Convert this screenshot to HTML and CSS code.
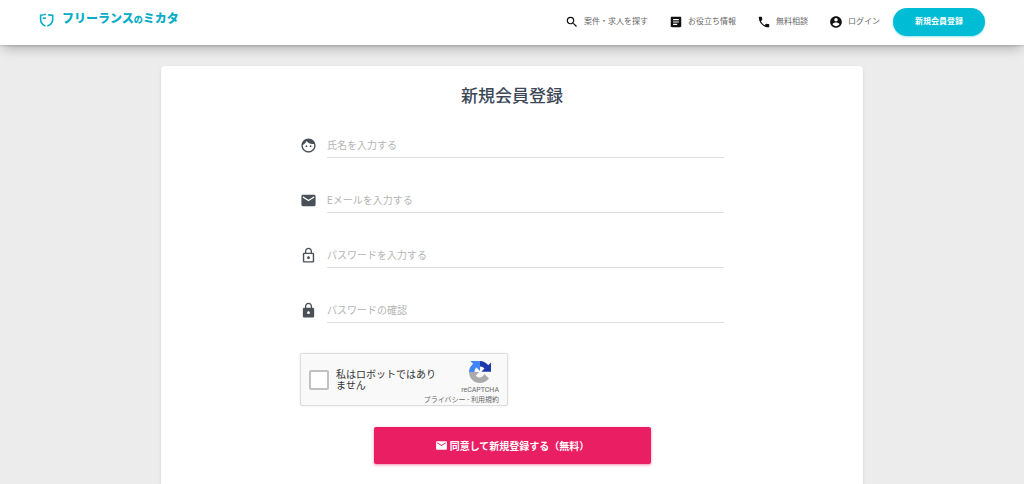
FILE: index.html
```
<!DOCTYPE html>
<html lang="ja">

<head>
    <meta charset="UTF-8">
    <meta name="viewport" content="width=device-width, initial-scale=1.0">
    <title>新規会員登録 | フリーランスのミカタ</title>
    <link rel="stylesheet" href="styles.css">
</head>

<body>
    <header class="navbar">
        <a class="logo" href="#">
            <svg viewBox="0 0 28 26" fill="none" stroke="currentColor" stroke-width="3">
                <path d="M13 2C10 3.500 6 4 3 4v8c0 6 3 9.500 9 12" />
                <path d="M17 3C20 4 22 4 25.500 4v8c0 6-4 10-10 12" />
                <path d="M7 9.500h6" />
            </svg>
            <span>フリーランス<small>の</small>ミカタ</span>
        </a>
        <nav class="menu">
            <a href="#">
                <svg viewBox="0 0 24 24"><path d="M15.500 14h-.79l-.28-.27A6.470 6.470 0 0 0 16 9.500 6.500 6.500 0 1 0 9.500 16c1.610 0 3.090-.59 4.230-1.570l.27.28v.79l5 4.990L20.490 19l-4.990-5zm-6 0C7.010 14 5 11.990 5 9.500S7.010 5 9.500 5 14 7.010 14 9.500 11.990 14 9.500 14z" /></svg>
                案件・求人を探す
            </a>
            <a href="#">
                <svg viewBox="0 0 24 24"><path d="M19 3H5c-1.100 0-2 .9-2 2v14c0 1.100.9 2 2 2h14c1.100 0 2-.9 2-2V5c0-1.100-.9-2-2-2zm-5 14H7v-2h7v2zm3-4H7v-2h10v2zm0-4H7V7h10v2z" /></svg>
                お役立ち情報
            </a>
            <a href="#">
                <svg viewBox="0 0 24 24"><path d="M6.620 10.790c1.440 2.830 3.760 5.140 6.590 6.590l2.200-2.200c.27-.27.67-.36 1.020-.24 1.120.37 2.330.57 3.570.57.55 0 1 .45 1 1V20c0 .55-.45 1-1 1-9.390 0-17-7.610-17-17 0-.55.45-1 1-1h3.500c.55 0 1 .45 1 1 0 1.250.2 2.450.57 3.570.11.35.03.74-.25 1.020l-2.200 2.200z" /></svg>
                無料相談
            </a>
            <a href="#">
                <svg viewBox="0 0 24 24"><path d="M12 2C6.480 2 2 6.480 2 12s4.480 10 10 10 10-4.480 10-10S17.520 2 12 2zm0 3c1.660 0 3 1.340 3 3s-1.340 3-3 3-3-1.340-3-3 1.340-3 3-3zm0 14.200c-2.500 0-4.710-1.280-6-3.220.03-1.990 4-3.080 6-3.080 1.990 0 5.970 1.090 6 3.080-1.290 1.940-3.500 3.220-6 3.220z" /></svg>
                ログイン
            </a>
        </nav>
        <a class="btn-register" href="#">新規会員登録</a>
    </header>

    <main class="card">
        <h1>新規会員登録</h1>
        <form>
            <div class="field">
                <label for="name" aria-label="氏名">
                    <svg viewBox="0 0 24 24"><path d="M9 11.750a1.250 1.250 0 1 0 0 2.500 1.250 1.250 0 0 0 0-2.500zm6 0a1.250 1.250 0 1 0 0 2.500 1.250 1.250 0 0 0 0-2.500zM12 2C6.480 2 2 6.480 2 12s4.480 10 10 10 10-4.480 10-10S17.520 2 12 2zm0 18c-4.410 0-8-3.590-8-8 0-.29.02-.58.05-.86 2.360-1.050 4.230-2.980 5.210-5.370C11.070 8.330 14.050 10 17.420 10c.78 0 1.530-.09 2.250-.26.21.71.33 1.470.33 2.260 0 4.410-3.590 8-8 8z" /></svg>
                </label>
                <input type="text" id="name" placeholder="氏名を入力する">
            </div>
            <div class="field">
                <label for="email" aria-label="Eメール">
                    <svg viewBox="0 0 24 24"><path d="M20 4H4c-1.100 0-2 .9-2 2v12c0 1.100.9 2 2 2h16c1.100 0 2-.9 2-2V6c0-1.100-.9-2-2-2zm0 4l-8 5-8-5V6l8 5 8-5v2z" /></svg>
                </label>
                <input type="email" id="email" placeholder="Eメールを入力する">
            </div>
            <div class="field">
                <label for="password" aria-label="パスワード">
                    <svg viewBox="0 0 24 24"><path fill-rule="evenodd" d="M12 17c1.100 0 2-.9 2-2s-.9-2-2-2-2 .9-2 2 .9 2 2 2zM18 8h-1V6c0-2.760-2.240-5-5-5S7 3.240 7 6v2H6c-1.100 0-2 .9-2 2v10c0 1.100.9 2 2 2h12c1.100 0 2-.9 2-2V10c0-1.100-.9-2-2-2zM8.900 6c0-1.710 1.390-3.100 3.100-3.100s3.100 1.390 3.100 3.100v2H8.900V6zM18 20H6V10h12v10z" /></svg>
                </label>
                <input type="password" id="password" placeholder="パスワードを入力する">
            </div>
            <div class="field">
                <label for="confirm" aria-label="パスワードの確認">
                    <svg viewBox="0 0 24 24"><path d="M18 8h-1V6c0-2.760-2.240-5-5-5S7 3.240 7 6v2H6c-1.100 0-2 .9-2 2v10c0 1.100.9 2 2 2h12c1.100 0 2-.9 2-2V10c0-1.100-.9-2-2-2zm-6 9c-1.100 0-2-.9-2-2s.9-2 2-2 2 .9 2 2-.9 2-2 2zm3.100-9H8.900V6c0-1.710 1.390-3.100 3.100-3.100s3.100 1.390 3.100 3.100v2z" /></svg>
                </label>
                <input type="password" id="confirm" placeholder="パスワードの確認">
            </div>

            <div class="captcha">
                <input type="checkbox" id="robot">
                <label for="robot">私はロボットではありません</label>
                <div class="captcha-brand">
                    <svg viewBox="0 0 64 64">
                        <path fill="#1c3aa9" d="M64 32V4l-8 8C50 5 42 0 32 0v16c6 0 10 2 13 6l-9 9h28z" />
                        <path fill="#4285f4" d="M32 0H4l8 8C5 14 0 22 0 32h16c0-6 2-10 6-13l9 9 1-1V0z" />
                        <path fill="#ababab" d="M0 32c0 18 14 32 32 32 11 0 20-5 26-13L45 38c-3 6-7 9-13 10-5 0-9-2-12-6l9-9-1-1H0z" />
                    </svg>
                    <span>reCAPTCHA</span>
                    <div class="captcha-links"><a href="#">プライバシー</a> - <a href="#">利用規約</a></div>
                </div>
            </div>

            <button type="submit" class="btn-submit">
                <svg viewBox="0 0 24 24"><path d="M20 4H4c-1.100 0-2 .9-2 2v12c0 1.100.9 2 2 2h16c1.100 0 2-.9 2-2V6c0-1.100-.9-2-2-2zm0 4l-8 5-8-5V6l8 5 8-5v2z" /></svg>
                同意して新規登録する（無料）
            </button>
        </form>
    </main>
</body>

</html>
```
FILE: styles.css
```
* {
    padding: 0;
    margin: 0;
    box-sizing: border-box;
}

body {
    background: #ececec;
    color: #3c4858;
    font-family: Roboto, "Noto Sans CJK JP", sans-serif;
}

a {
    color: inherit;
    text-decoration: none;
}

svg {
    display: block;
    flex: none;
    fill: currentColor;
}

.navbar {
    display: flex;
    align-items: center;
    height: 45px;
    padding: 0 39px 2px;
    background: white;
    box-shadow: 0 4px 16px rgba(0, 0, 0, 0.1), 0 7px 10px -5px rgba(0, 0, 0, 0.2), 0 1px 2px rgba(0, 0, 0, 0.15);
}

.logo {
    display: flex;
    align-items: center;
    gap: 8px;
    margin-right: auto;
    padding-bottom: 4px;
    color: #09adc8;
    font-size: 12px;
    font-weight: 900;
    line-height: 14px;
}

.logo svg {
    width: 15px;
    height: 14px;
    fill: none;
}

.logo small {
    font-size: 9px;
}

.menu {
    display: flex;
    gap: 21px;
    margin-right: 13px;
}

.menu a {
    display: flex;
    align-items: center;
    gap: 5px;
    color: #666666;
    font-size: 8px;
    line-height: 16px;
}

.menu svg {
    width: 14px;
    height: 14px;
    color: #111111;
}

.btn-register {
    padding: 6px 22px;
    border-radius: 14px;
    background: #00bcd4;
    box-shadow: 0 1px 2px rgba(0, 188, 212, 0.4);
    color: white;
    font-size: 8px;
    font-weight: 700;
    line-height: 16px;
}

.card {
    max-width: 702px;
    margin: 21px auto 40px;
    padding: 17px 20px 40px;
    border-radius: 4px;
    background: white;
    box-shadow: 0 1px 3px rgba(0, 0, 0, 0.12);
}

.card h1 {
    margin-bottom: 23px;
    font-size: 17px;
    font-weight: 500;
    line-height: 26px;
    text-align: center;
}

form {
    max-width: 424px;
    margin: 0 auto;
}

.field {
    display: flex;
    align-items: center;
    gap: 10px;
    margin-bottom: 29px;
}

.field svg {
    width: 17px;
    height: 17px;
    color: #495057;
}

.field input {
    flex: 1;
    min-width: 0;
    height: 26px;
    padding-top: 2px;
    border: none;
    border-bottom: 1px solid #dddddd;
    background: none;
    color: #495057;
    font-family: inherit;
    font-size: 10px;
    outline: none;
}

.field input::placeholder {
    color: #b4b4b4;
}

.captcha {
    display: flex;
    align-items: center;
    width: 208px;
    height: 53px;
    margin: 30px 0 21px;
    padding: 0 8px;
    border: 1px solid #dddddd;
    border-radius: 2px;
    background: #f9f9f9;
    box-shadow: 0 0 3px rgba(0, 0, 0, 0.08);
    color: #333333;
}

.captcha input {
    appearance: none;
    flex: none;
    width: 20px;
    height: 20px;
    margin-right: 7px;
    border: 2px solid #c1c1c1;
    border-radius: 2px;
    background: white;
}

.captcha label {
    flex: none;
    width: 100px;
    font-size: 10px;
    line-height: 11px;
}

.captcha-brand {
    display: flex;
    flex: 1;
    flex-direction: column;
    align-items: flex-end;
    min-width: 0;
    padding-top: 6px;
    color: #666666;
    font-size: 7px;
    line-height: 10px;
}

.captcha-brand svg {
    width: 22px;
    height: 22px;
    margin: 0 8px 2px 0;
}

.captcha-links {
    white-space: nowrap;
}

.btn-submit {
    display: flex;
    align-items: center;
    justify-content: center;
    gap: 2px;
    width: 277px;
    max-width: 100%;
    height: 37px;
    margin: 0 auto;
    border: none;
    border-radius: 2px;
    background: #e91e63;
    box-shadow: 0 1px 3px rgba(233, 30, 99, 0.5);
    color: white;
    font-family: inherit;
    font-size: 10px;
    font-weight: 700;
    cursor: pointer;
}

.btn-submit svg {
    width: 13px;
    height: 13px;
}
```
